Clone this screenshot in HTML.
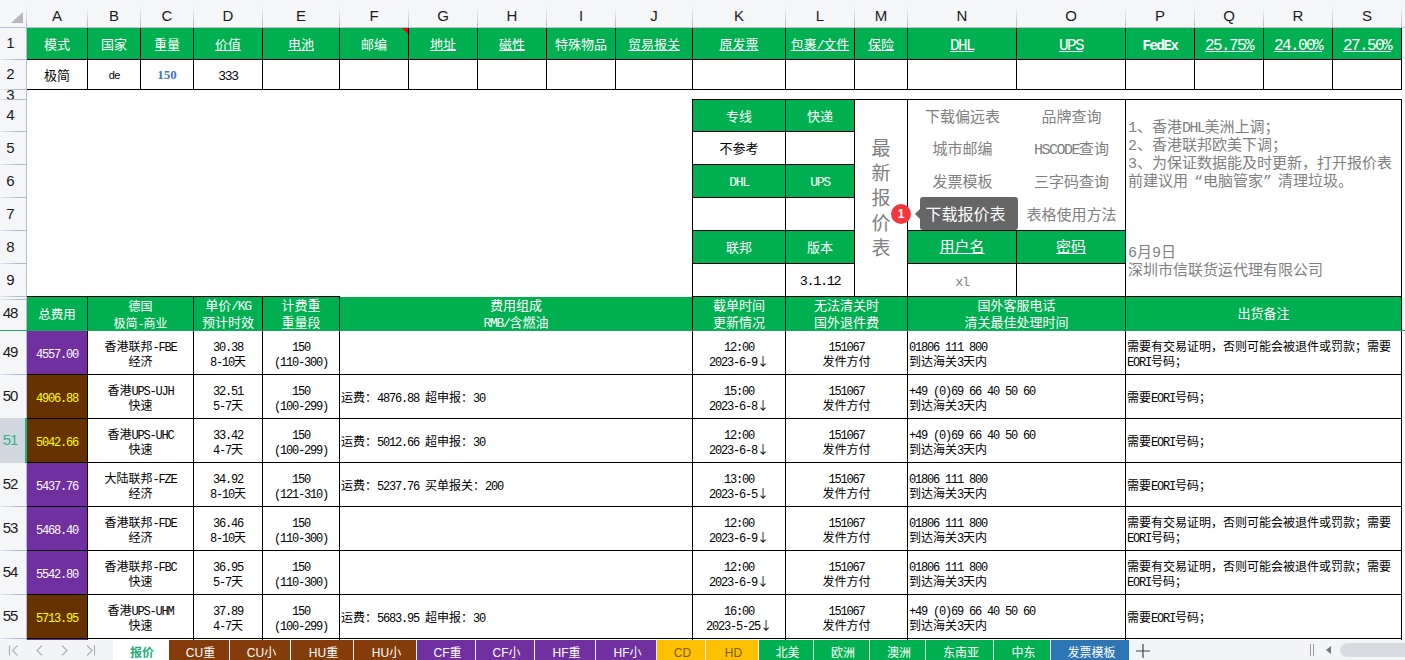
<!DOCTYPE html>
<html lang="zh-CN">
<head>
<meta charset="utf-8">
<title>报价</title>
<style>
html,body{margin:0;padding:0;}
body{width:1405px;height:660px;overflow:hidden;background:#fff;position:relative;
  font-family:"Liberation Mono","Noto Sans CJK SC",sans-serif;font-size:12px;color:#000;}
#grid{position:absolute;left:0;top:0;width:1405px;height:640px;overflow:hidden;background:#fff;}
.c{position:absolute;box-sizing:border-box;border:0 solid #000;text-align:center;line-height:15px;white-space:nowrap;overflow:hidden;}
.c .t{display:block;position:absolute;left:0;right:0;top:0;}
.l{letter-spacing:-0.1em;}
.ar{font-family:"Noto Sans CJK SC",sans-serif;line-height:0;}
.w{color:#fff;}
.y{color:#FFFF00;}
.u .t{text-decoration:underline;text-decoration-thickness:1px;text-underline-offset:1px;}
.b{font-weight:bold;}
.blue{color:#4472C4;font-weight:bold;font-family:"Liberation Serif","Noto Serif CJK SC",serif;font-size:13px !important;}
.blue .l{letter-spacing:0;margin:0;}

.grey{color:#808080;}
.left{text-align:left;}
.c.left .t{left:1px;}
.wrap{white-space:normal;}
.big{font-size:19px;line-height:25px;}
.c.big .t{top:38px;}
.links{display:block;}
.links .t{display:block;position:absolute;left:0;top:0;}
.lk{position:absolute;text-align:center;color:#808080;font-size:15px;white-space:nowrap;}
.notebox{display:block;}
.notebox .t{display:block;position:absolute;left:0;top:0;}
.notes{position:absolute;left:2px;width:272px;text-align:left;color:#808080;font-size:15px;line-height:18px;white-space:nowrap;}
.l15{letter-spacing:-0.1em;}
.ql,.qr{display:inline-block;width:1em;}
.ql{text-align:right;}
.qr{text-align:left;}
/* headers */
#colhdr{position:absolute;left:0;top:0;width:1405px;height:28px;background:#F5F6F8;}
#rowhdr{position:absolute;left:0;top:28px;width:27px;height:612px;background:#F5F6F8;}
.ch{position:absolute;top:0;height:27px;line-height:32px;text-align:center;font-family:"Liberation Sans",sans-serif;font-size:15px;color:#1a1a1a;}
.cs{position:absolute;top:6px;width:1px;height:22px;background:linear-gradient(to bottom,rgba(176,183,206,0),rgba(176,183,206,1));}
.hl{position:absolute;left:0;top:27px;width:1405px;height:1px;background:#B9BFD4;}
.rh{position:absolute;left:0;width:21px;text-align:center;font-family:"Liberation Sans",sans-serif;font-size:15px;letter-spacing:-1px;text-indent:-1px;color:#1a1a1a;}
.rh.sel{background:#D2D6DF;color:#2EB58A;padding-right:4px;}
.rs{position:absolute;left:0;width:27px;height:1px;background:linear-gradient(to right,rgba(176,183,206,0.25),rgba(176,183,206,1) 70%);}
.vl{position:absolute;left:26px;top:28px;width:1px;height:612px;background:#B4BBD2;}
/* tab bar */
#tabbar{position:absolute;left:0;top:640px;width:1405px;height:20px;background:#F3F4F8;font-family:"Liberation Sans","Noto Sans CJK SC",sans-serif;font-size:13px;}
.tab{position:absolute;top:0;height:20px;line-height:26px;text-align:center;white-space:nowrap;font-size:12px;text-indent:3px;overflow:hidden;}
.atab{position:absolute;left:113px;top:0;width:56px;height:20px;line-height:26px;overflow:hidden;background:#fff;color:#1FAF7A;font-weight:bold;text-align:center;font-size:12px;text-indent:2px;}
</style>
</head>
<body>
<div id="grid">
<div class="c g w f13" style="left:27px;top:28px;width:61px;height:32px;background:#00B050;border-width:0px 1px 1px 0px;font-size:13px;"><span class="t" style="top:10px">模式</span></div>
<div class="c g w f13" style="left:88px;top:28px;width:53px;height:32px;background:#00B050;border-width:0px 1px 1px 0px;font-size:13px;"><span class="t" style="top:10px">国家</span></div>
<div class="c g w f13" style="left:141px;top:28px;width:53px;height:32px;background:#00B050;border-width:0px 1px 1px 0px;font-size:13px;"><span class="t" style="top:10px">重量</span></div>
<div class="c g w u f13" style="left:194px;top:28px;width:69px;height:32px;background:#00B050;border-width:0px 1px 1px 0px;font-size:13px;"><span class="t" style="top:10px">价值</span></div>
<div class="c g w u f13" style="left:263px;top:28px;width:77px;height:32px;background:#00B050;border-width:0px 1px 1px 0px;font-size:13px;"><span class="t" style="top:10px">电池</span></div>
<div class="c g w f13" style="left:340px;top:28px;width:69px;height:32px;background:#00B050;border-width:0px 1px 1px 0px;font-size:13px;"><span class="t" style="top:10px">邮编</span></div>
<div class="c g w u f13" style="left:409px;top:28px;width:69px;height:32px;background:#00B050;border-width:0px 1px 1px 0px;font-size:13px;"><span class="t" style="top:10px">地址</span></div>
<div class="c g w u f13" style="left:478px;top:28px;width:69px;height:32px;background:#00B050;border-width:0px 1px 1px 0px;font-size:13px;"><span class="t" style="top:10px">磁性</span></div>
<div class="c g w f13" style="left:547px;top:28px;width:69px;height:32px;background:#00B050;border-width:0px 1px 1px 0px;font-size:13px;"><span class="t" style="top:10px">特殊物品</span></div>
<div class="c g w u f13" style="left:616px;top:28px;width:77px;height:32px;background:#00B050;border-width:0px 1px 1px 0px;font-size:13px;"><span class="t" style="top:10px">贸易报关</span></div>
<div class="c g w u f13" style="left:693px;top:28px;width:93px;height:32px;background:#00B050;border-width:0px 1px 1px 0px;font-size:13px;"><span class="t" style="top:10px">原发票</span></div>
<div class="c g w u f13" style="left:786px;top:28px;width:69px;height:32px;background:#00B050;border-width:0px 1px 1px 0px;font-size:13px;"><span class="t" style="top:10px">包裹<span class="l">/</span>文件</span></div>
<div class="c g w u f13" style="left:855px;top:28px;width:53px;height:32px;background:#00B050;border-width:0px 1px 1px 0px;font-size:13px;"><span class="t" style="top:10px">保险</span></div>
<div class="c g w u f16" style="left:908px;top:28px;width:109px;height:32px;background:#00B050;border-width:0px 1px 1px 0px;font-size:16px;"><span class="t" style="top:11px"><span class="l">DHL</span></span></div>
<div class="c g w u f16" style="left:1017px;top:28px;width:109px;height:32px;background:#00B050;border-width:0px 1px 1px 0px;font-size:16px;"><span class="t" style="top:11px"><span class="l">UPS</span></span></div>
<div class="c g w b f14" style="left:1126px;top:28px;width:69px;height:32px;background:#00B050;border-width:0px 1px 1px 0px;font-size:14px;"><span class="t" style="top:11px"><span class="l">FedEx</span></span></div>
<div class="c g w u f16" style="left:1195px;top:28px;width:69px;height:32px;background:#00B050;border-width:0px 1px 1px 0px;font-size:16px;"><span class="t" style="top:11px"><span class="l">25.75%</span></span></div>
<div class="c g w u f16" style="left:1264px;top:28px;width:69px;height:32px;background:#00B050;border-width:0px 1px 1px 0px;font-size:16px;"><span class="t" style="top:11px"><span class="l">24.00%</span></span></div>
<div class="c g w u f16" style="left:1333px;top:28px;width:69px;height:32px;background:#00B050;border-width:0px 1px 1px 0px;font-size:16px;"><span class="t" style="top:11px"><span class="l">27.50%</span></span></div>
<div class="c  f13" style="left:27px;top:60px;width:61px;height:30px;border-width:0px 1px 1px 0px;font-size:13px;"><span class="t" style="top:9px">极简</span></div>
<div class="c  f11" style="left:88px;top:60px;width:53px;height:30px;border-width:0px 1px 1px 0px;font-size:11px;"><span class="t" style="top:9px"><span class="l">de</span></span></div>
<div class="c blue f13" style="left:141px;top:60px;width:53px;height:30px;border-width:0px 1px 1px 0px;font-size:13px;"><span class="t" style="top:7px"><span class="l">150</span></span></div>
<div class="c  f13" style="left:194px;top:60px;width:69px;height:30px;border-width:0px 1px 1px 0px;font-size:13px;"><span class="t" style="top:9px"><span class="l">333</span></span></div>
<div class="c  f13" style="left:263px;top:60px;width:77px;height:30px;border-width:0px 1px 1px 0px;font-size:13px;"><span class="t" style="top:9px"></span></div>
<div class="c  f13" style="left:340px;top:60px;width:69px;height:30px;border-width:0px 1px 1px 0px;font-size:13px;"><span class="t" style="top:9px"></span></div>
<div class="c  f13" style="left:409px;top:60px;width:69px;height:30px;border-width:0px 1px 1px 0px;font-size:13px;"><span class="t" style="top:9px"></span></div>
<div class="c  f13" style="left:478px;top:60px;width:69px;height:30px;border-width:0px 1px 1px 0px;font-size:13px;"><span class="t" style="top:9px"></span></div>
<div class="c  f13" style="left:547px;top:60px;width:69px;height:30px;border-width:0px 1px 1px 0px;font-size:13px;"><span class="t" style="top:9px"></span></div>
<div class="c  f13" style="left:616px;top:60px;width:77px;height:30px;border-width:0px 1px 1px 0px;font-size:13px;"><span class="t" style="top:9px"></span></div>
<div class="c  f13" style="left:693px;top:60px;width:93px;height:30px;border-width:0px 1px 1px 0px;font-size:13px;"><span class="t" style="top:9px"></span></div>
<div class="c  f13" style="left:786px;top:60px;width:69px;height:30px;border-width:0px 1px 1px 0px;font-size:13px;"><span class="t" style="top:9px"></span></div>
<div class="c  f13" style="left:855px;top:60px;width:53px;height:30px;border-width:0px 1px 1px 0px;font-size:13px;"><span class="t" style="top:9px"></span></div>
<div class="c  f13" style="left:908px;top:60px;width:109px;height:30px;border-width:0px 1px 1px 0px;font-size:13px;"><span class="t" style="top:9px"></span></div>
<div class="c  f13" style="left:1017px;top:60px;width:109px;height:30px;border-width:0px 1px 1px 0px;font-size:13px;"><span class="t" style="top:9px"></span></div>
<div class="c  f13" style="left:1126px;top:60px;width:69px;height:30px;border-width:0px 1px 1px 0px;font-size:13px;"><span class="t" style="top:9px"></span></div>
<div class="c  f13" style="left:1195px;top:60px;width:69px;height:30px;border-width:0px 1px 1px 0px;font-size:13px;"><span class="t" style="top:9px"></span></div>
<div class="c  f13" style="left:1264px;top:60px;width:69px;height:30px;border-width:0px 1px 1px 0px;font-size:13px;"><span class="t" style="top:9px"></span></div>
<div class="c  f13" style="left:1333px;top:60px;width:69px;height:30px;border-width:0px 1px 1px 0px;font-size:13px;"><span class="t" style="top:9px"></span></div>
<div class="c w f13" style="left:692px;top:99px;width:94px;height:33px;background:#00B050;border-width:1px 1px 1px 1px;font-size:13px;"><span class="t" style="top:10px">专线</span></div>
<div class="c w f13" style="left:786px;top:99px;width:69px;height:33px;background:#00B050;border-width:1px 1px 1px 0px;font-size:13px;"><span class="t" style="top:10px">快递</span></div>
<div class="c  f13" style="left:692px;top:132px;width:94px;height:33px;border-width:0px 1px 1px 1px;font-size:13px;"><span class="t" style="top:10px">不参考</span></div>
<div class="c  f13" style="left:786px;top:132px;width:69px;height:33px;border-width:0px 1px 1px 0px;font-size:13px;"><span class="t" style="top:10px"></span></div>
<div class="c w f13" style="left:692px;top:165px;width:94px;height:33px;background:#00B050;border-width:0px 1px 1px 1px;font-size:13px;"><span class="t" style="top:10px"><span class="l">DHL</span></span></div>
<div class="c w f13" style="left:786px;top:165px;width:69px;height:33px;background:#00B050;border-width:0px 1px 1px 0px;font-size:13px;"><span class="t" style="top:10px"><span class="l">UPS</span></span></div>
<div class="c  f13" style="left:692px;top:198px;width:94px;height:33px;border-width:0px 1px 1px 1px;font-size:13px;"><span class="t" style="top:10px"></span></div>
<div class="c  f13" style="left:786px;top:198px;width:69px;height:33px;border-width:0px 1px 1px 0px;font-size:13px;"><span class="t" style="top:10px"></span></div>
<div class="c w f13" style="left:692px;top:231px;width:94px;height:33px;background:#00B050;border-width:0px 1px 1px 1px;font-size:13px;"><span class="t" style="top:10px">联邦</span></div>
<div class="c w f13" style="left:786px;top:231px;width:69px;height:33px;background:#00B050;border-width:0px 1px 1px 0px;font-size:13px;"><span class="t" style="top:10px">版本</span></div>
<div class="c  f13" style="left:692px;top:264px;width:94px;height:33px;border-width:0px 1px 1px 1px;font-size:13px;"><span class="t" style="top:10px"></span></div>
<div class="c  f13" style="left:786px;top:264px;width:69px;height:33px;border-width:0px 1px 1px 0px;font-size:13.5px;"><span class="t" style="top:10px"><span class="l">3.1.12</span></span></div>
<div class="c big grey" style="left:855px;top:99px;width:53px;height:198px;border-width:1px 1px 1px 0px;"><span class="t">最<br>新<br>报<br>价<br>表</span></div>
<div class="c links" style="left:908px;top:99px;width:218px;height:132px;border-width:1px 1px 1px 0px;"><span class="t"><div class="lk" style="left:0;top:3px;width:109px;height:31px;line-height:31px">下载偏远表</div><div class="lk" style="left:109px;top:3px;width:109px;height:31px;line-height:31px">品牌查询</div><div class="lk" style="left:0;top:35px;width:109px;height:32px;line-height:32px">城市邮编</div><div class="lk" style="left:109px;top:35px;width:109px;height:32px;line-height:32px"><span class="l">HSCODE</span>查询</div><div class="lk" style="left:0;top:68px;width:109px;height:32px;line-height:32px">发票模板</div><div class="lk" style="left:109px;top:68px;width:109px;height:32px;line-height:32px">三字码查询</div><div class="lk" style="left:0;top:101px;width:109px;height:32px;line-height:32px"></div><div class="lk" style="left:109px;top:101px;width:109px;height:32px;line-height:32px">表格使用方法</div></span></div>
<div class="c w u f15" style="left:908px;top:231px;width:109px;height:33px;background:#00B050;border-width:0px 1px 1px 0px;font-size:15px;"><span class="t" style="top:10px">用户名</span></div>
<div class="c w u f15" style="left:1017px;top:231px;width:109px;height:33px;background:#00B050;border-width:0px 1px 1px 0px;font-size:15px;"><span class="t" style="top:10px">密码</span></div>
<div class="c grey f13" style="left:908px;top:264px;width:109px;height:33px;border-width:0px 1px 1px 0px;font-size:13.5px;"><span class="t" style="top:11px"><span class="l">xl</span></span></div>
<div class="c " style="left:1017px;top:264px;width:109px;height:33px;border-width:0px 1px 1px 0px;"><span class="t" style="top:11px"></span></div>
<div class="c notebox" style="left:1126px;top:99px;width:276px;height:198px;border-width:1px 1px 1px 0px;"><span class="t"><div class="notes" style="top:20px">1、香港<span class="l15">DHL</span>美洲上调；<br>2、香港联邦欧美下调；<br>3、为保证数据能及时更新，打开报价表<br>前建议用<span class="ql">“</span>电脑管家<span class="qr">”</span>清理垃圾。</div><div class="notes" style="top:145px">6月9日<br>深圳市信联货运代理有限公司</div></span></div>
<div class="c w f12" style="left:27px;top:296px;width:61px;height:35px;background:#00B050;border-width:1px 1px 1px 0px;font-size:12.5px;"><span class="t" style="top:12px">总费用</span></div>
<div class="c w" style="left:88px;top:296px;width:106px;height:35px;background:#00B050;border-width:1px 1px 1px 0px;line-height:16.5px;"><span class="t" style="top:3px">德国<br>极简<span class="l">-</span>商业</span></div>
<div class="c w f13" style="left:194px;top:296px;width:69px;height:35px;background:#00B050;border-width:1px 1px 1px 0px;font-size:13px;line-height:16.5px;"><span class="t" style="top:2px">单价<span class="l">/KG</span><br>预计时效</span></div>
<div class="c w f13" style="left:263px;top:296px;width:77px;height:35px;background:#00B050;border-width:1px 1px 1px 0px;font-size:13px;line-height:16.5px;"><span class="t" style="top:2px">计费重<br>重量段</span></div>
<div class="c w f13" style="left:340px;top:297px;width:353px;height:34px;background:#00B050;border-width:0px 1px 0px 0px;font-size:13px;line-height:16.5px;"><span class="t" style="top:2px">费用组成<br><span class="l">RMB/</span>含燃油</span></div>
<div class="c w f13" style="left:693px;top:297px;width:93px;height:34px;background:#00B050;border-width:0px 1px 0px 0px;font-size:13px;line-height:16.5px;"><span class="t" style="top:2px">截单时间<br>更新情况</span></div>
<div class="c w f13" style="left:786px;top:297px;width:122px;height:34px;background:#00B050;border-width:0px 1px 0px 0px;font-size:13px;line-height:16.5px;"><span class="t" style="top:2px">无法清关时<br>国外退件费</span></div>
<div class="c w f13" style="left:908px;top:297px;width:218px;height:34px;background:#00B050;border-width:0px 1px 0px 0px;font-size:13px;line-height:16.5px;"><span class="t" style="top:2px">国外客服电话<br>清关最佳处理时间</span></div>
<div class="c w f13" style="left:1126px;top:297px;width:276px;height:34px;background:#00B050;border-width:0px 1px 0px 0px;font-size:13px;line-height:16.5px;"><span class="t" style="top:10px">出货备注</span></div>
<div class="c w num" style="left:27px;top:331px;width:61px;height:44px;background:#7030A0;border-width:0px 1px 1px 0px;"><span class="t" style="top:17px"><span class="l">4557.00</span></span></div>
<div class="c " style="left:88px;top:331px;width:106px;height:44px;border-width:0px 1px 1px 0px;"><span class="t" style="top:10px">香港联邦<span class="l">-FBE</span><br>经济</span></div>
<div class="c " style="left:194px;top:331px;width:69px;height:44px;border-width:0px 1px 1px 0px;"><span class="t" style="top:10px"><span class="l">30.38</span><br><span class="l">8-10</span>天</span></div>
<div class="c " style="left:263px;top:331px;width:77px;height:44px;border-width:0px 1px 1px 0px;"><span class="t" style="top:10px"><span class="l">150</span><br><span class="l">(110-300)</span></span></div>
<div class="c left" style="left:340px;top:331px;width:353px;height:44px;border-width:0px 1px 1px 0px;"><span class="t" style="top:17px"></span></div>
<div class="c " style="left:693px;top:331px;width:93px;height:44px;border-width:0px 1px 1px 0px;"><span class="t" style="top:10px"><span class="l">12:00</span><br><span class="l">2023-6-9</span><span class="ar">↓</span></span></div>
<div class="c " style="left:786px;top:331px;width:122px;height:44px;border-width:0px 1px 1px 0px;"><span class="t" style="top:10px"><span class="l">151067</span><br>发件方付</span></div>
<div class="c left" style="left:908px;top:331px;width:218px;height:44px;border-width:0px 1px 1px 0px;"><span class="t" style="top:10px"><span class="l">01806 111 800</span><br>到达海关<span class="l">3</span>天内</span></div>
<div class="c left wrap" style="left:1126px;top:331px;width:276px;height:44px;border-width:0px 1px 1px 0px;"><span class="t" style="top:10px">需要有交易证明，否则可能会被退件或罚款；需要<span class="l">EORI</span>号码；</span></div>
<div class="c y num" style="left:27px;top:375px;width:61px;height:44px;background:#663300;border-width:0px 1px 1px 0px;"><span class="t" style="top:17px"><span class="l">4906.88</span></span></div>
<div class="c " style="left:88px;top:375px;width:106px;height:44px;border-width:0px 1px 1px 0px;"><span class="t" style="top:10px">香港<span class="l">UPS-UJH</span><br>快速</span></div>
<div class="c " style="left:194px;top:375px;width:69px;height:44px;border-width:0px 1px 1px 0px;"><span class="t" style="top:10px"><span class="l">32.51</span><br><span class="l">5-7</span>天</span></div>
<div class="c " style="left:263px;top:375px;width:77px;height:44px;border-width:0px 1px 1px 0px;"><span class="t" style="top:10px"><span class="l">150</span><br><span class="l">(100-299)</span></span></div>
<div class="c left" style="left:340px;top:375px;width:353px;height:44px;border-width:0px 1px 1px 0px;"><span class="t" style="top:17px">运费：<span class="l">4876.88 </span>超申报：<span class="l">30</span></span></div>
<div class="c " style="left:693px;top:375px;width:93px;height:44px;border-width:0px 1px 1px 0px;"><span class="t" style="top:10px"><span class="l">15:00</span><br><span class="l">2023-6-8</span><span class="ar">↓</span></span></div>
<div class="c " style="left:786px;top:375px;width:122px;height:44px;border-width:0px 1px 1px 0px;"><span class="t" style="top:10px"><span class="l">151067</span><br>发件方付</span></div>
<div class="c left" style="left:908px;top:375px;width:218px;height:44px;border-width:0px 1px 1px 0px;"><span class="t" style="top:10px"><span class="l">+49 (0)69 66 40 50 60</span><br>到达海关<span class="l">3</span>天内</span></div>
<div class="c left wrap" style="left:1126px;top:375px;width:276px;height:44px;border-width:0px 1px 1px 0px;"><span class="t" style="top:17px">需要<span class="l">EORI</span>号码；</span></div>
<div class="c y num" style="left:27px;top:419px;width:61px;height:44px;background:#663300;border-width:0px 1px 1px 0px;"><span class="t" style="top:17px"><span class="l">5042.66</span></span></div>
<div class="c " style="left:88px;top:419px;width:106px;height:44px;border-width:0px 1px 1px 0px;"><span class="t" style="top:10px">香港<span class="l">UPS-UHC</span><br>快速</span></div>
<div class="c " style="left:194px;top:419px;width:69px;height:44px;border-width:0px 1px 1px 0px;"><span class="t" style="top:10px"><span class="l">33.42</span><br><span class="l">4-7</span>天</span></div>
<div class="c " style="left:263px;top:419px;width:77px;height:44px;border-width:0px 1px 1px 0px;"><span class="t" style="top:10px"><span class="l">150</span><br><span class="l">(100-299)</span></span></div>
<div class="c left" style="left:340px;top:419px;width:353px;height:44px;border-width:0px 1px 1px 0px;"><span class="t" style="top:17px">运费：<span class="l">5012.66 </span>超申报：<span class="l">30</span></span></div>
<div class="c " style="left:693px;top:419px;width:93px;height:44px;border-width:0px 1px 1px 0px;"><span class="t" style="top:10px"><span class="l">12:00</span><br><span class="l">2023-6-8</span><span class="ar">↓</span></span></div>
<div class="c " style="left:786px;top:419px;width:122px;height:44px;border-width:0px 1px 1px 0px;"><span class="t" style="top:10px"><span class="l">151067</span><br>发件方付</span></div>
<div class="c left" style="left:908px;top:419px;width:218px;height:44px;border-width:0px 1px 1px 0px;"><span class="t" style="top:10px"><span class="l">+49 (0)69 66 40 50 60</span><br>到达海关<span class="l">3</span>天内</span></div>
<div class="c left wrap" style="left:1126px;top:419px;width:276px;height:44px;border-width:0px 1px 1px 0px;"><span class="t" style="top:17px">需要<span class="l">EORI</span>号码；</span></div>
<div class="c w num" style="left:27px;top:463px;width:61px;height:44px;background:#7030A0;border-width:0px 1px 1px 0px;"><span class="t" style="top:17px"><span class="l">5437.76</span></span></div>
<div class="c " style="left:88px;top:463px;width:106px;height:44px;border-width:0px 1px 1px 0px;"><span class="t" style="top:10px">大陆联邦<span class="l">-FZE</span><br>经济</span></div>
<div class="c " style="left:194px;top:463px;width:69px;height:44px;border-width:0px 1px 1px 0px;"><span class="t" style="top:10px"><span class="l">34.92</span><br><span class="l">8-10</span>天</span></div>
<div class="c " style="left:263px;top:463px;width:77px;height:44px;border-width:0px 1px 1px 0px;"><span class="t" style="top:10px"><span class="l">150</span><br><span class="l">(121-310)</span></span></div>
<div class="c left" style="left:340px;top:463px;width:353px;height:44px;border-width:0px 1px 1px 0px;"><span class="t" style="top:17px">运费：<span class="l">5237.76 </span>买单报关：<span class="l">200</span></span></div>
<div class="c " style="left:693px;top:463px;width:93px;height:44px;border-width:0px 1px 1px 0px;"><span class="t" style="top:10px"><span class="l">13:00</span><br><span class="l">2023-6-5</span><span class="ar">↓</span></span></div>
<div class="c " style="left:786px;top:463px;width:122px;height:44px;border-width:0px 1px 1px 0px;"><span class="t" style="top:10px"><span class="l">151067</span><br>发件方付</span></div>
<div class="c left" style="left:908px;top:463px;width:218px;height:44px;border-width:0px 1px 1px 0px;"><span class="t" style="top:10px"><span class="l">01806 111 800</span><br>到达海关<span class="l">3</span>天内</span></div>
<div class="c left wrap" style="left:1126px;top:463px;width:276px;height:44px;border-width:0px 1px 1px 0px;"><span class="t" style="top:17px">需要<span class="l">EORI</span>号码；</span></div>
<div class="c w num" style="left:27px;top:507px;width:61px;height:44px;background:#7030A0;border-width:0px 1px 1px 0px;"><span class="t" style="top:17px"><span class="l">5468.40</span></span></div>
<div class="c " style="left:88px;top:507px;width:106px;height:44px;border-width:0px 1px 1px 0px;"><span class="t" style="top:10px">香港联邦<span class="l">-FDE</span><br>经济</span></div>
<div class="c " style="left:194px;top:507px;width:69px;height:44px;border-width:0px 1px 1px 0px;"><span class="t" style="top:10px"><span class="l">36.46</span><br><span class="l">8-10</span>天</span></div>
<div class="c " style="left:263px;top:507px;width:77px;height:44px;border-width:0px 1px 1px 0px;"><span class="t" style="top:10px"><span class="l">150</span><br><span class="l">(110-300)</span></span></div>
<div class="c left" style="left:340px;top:507px;width:353px;height:44px;border-width:0px 1px 1px 0px;"><span class="t" style="top:17px"></span></div>
<div class="c " style="left:693px;top:507px;width:93px;height:44px;border-width:0px 1px 1px 0px;"><span class="t" style="top:10px"><span class="l">12:00</span><br><span class="l">2023-6-9</span><span class="ar">↓</span></span></div>
<div class="c " style="left:786px;top:507px;width:122px;height:44px;border-width:0px 1px 1px 0px;"><span class="t" style="top:10px"><span class="l">151067</span><br>发件方付</span></div>
<div class="c left" style="left:908px;top:507px;width:218px;height:44px;border-width:0px 1px 1px 0px;"><span class="t" style="top:10px"><span class="l">01806 111 800</span><br>到达海关<span class="l">3</span>天内</span></div>
<div class="c left wrap" style="left:1126px;top:507px;width:276px;height:44px;border-width:0px 1px 1px 0px;"><span class="t" style="top:10px">需要有交易证明，否则可能会被退件或罚款；需要<span class="l">EORI</span>号码；</span></div>
<div class="c w num" style="left:27px;top:551px;width:61px;height:44px;background:#7030A0;border-width:0px 1px 1px 0px;"><span class="t" style="top:17px"><span class="l">5542.80</span></span></div>
<div class="c " style="left:88px;top:551px;width:106px;height:44px;border-width:0px 1px 1px 0px;"><span class="t" style="top:10px">香港联邦<span class="l">-FBC</span><br>快速</span></div>
<div class="c " style="left:194px;top:551px;width:69px;height:44px;border-width:0px 1px 1px 0px;"><span class="t" style="top:10px"><span class="l">36.95</span><br><span class="l">5-7</span>天</span></div>
<div class="c " style="left:263px;top:551px;width:77px;height:44px;border-width:0px 1px 1px 0px;"><span class="t" style="top:10px"><span class="l">150</span><br><span class="l">(110-300)</span></span></div>
<div class="c left" style="left:340px;top:551px;width:353px;height:44px;border-width:0px 1px 1px 0px;"><span class="t" style="top:17px"></span></div>
<div class="c " style="left:693px;top:551px;width:93px;height:44px;border-width:0px 1px 1px 0px;"><span class="t" style="top:10px"><span class="l">12:00</span><br><span class="l">2023-6-9</span><span class="ar">↓</span></span></div>
<div class="c " style="left:786px;top:551px;width:122px;height:44px;border-width:0px 1px 1px 0px;"><span class="t" style="top:10px"><span class="l">151067</span><br>发件方付</span></div>
<div class="c left" style="left:908px;top:551px;width:218px;height:44px;border-width:0px 1px 1px 0px;"><span class="t" style="top:10px"><span class="l">01806 111 800</span><br>到达海关<span class="l">3</span>天内</span></div>
<div class="c left wrap" style="left:1126px;top:551px;width:276px;height:44px;border-width:0px 1px 1px 0px;"><span class="t" style="top:10px">需要有交易证明，否则可能会被退件或罚款；需要<span class="l">EORI</span>号码；</span></div>
<div class="c y num" style="left:27px;top:595px;width:61px;height:44px;background:#663300;border-width:0px 1px 1px 0px;"><span class="t" style="top:17px"><span class="l">5713.95</span></span></div>
<div class="c " style="left:88px;top:595px;width:106px;height:44px;border-width:0px 1px 1px 0px;"><span class="t" style="top:10px">香港<span class="l">UPS-UHM</span><br>快速</span></div>
<div class="c " style="left:194px;top:595px;width:69px;height:44px;border-width:0px 1px 1px 0px;"><span class="t" style="top:10px"><span class="l">37.89</span><br><span class="l">4-7</span>天</span></div>
<div class="c " style="left:263px;top:595px;width:77px;height:44px;border-width:0px 1px 1px 0px;"><span class="t" style="top:10px"><span class="l">150</span><br><span class="l">(100-299)</span></span></div>
<div class="c left" style="left:340px;top:595px;width:353px;height:44px;border-width:0px 1px 1px 0px;"><span class="t" style="top:17px">运费：<span class="l">5683.95 </span>超申报：<span class="l">30</span></span></div>
<div class="c " style="left:693px;top:595px;width:93px;height:44px;border-width:0px 1px 1px 0px;"><span class="t" style="top:10px"><span class="l">16:00</span><br><span class="l">2023-5-25</span><span class="ar">↓</span></span></div>
<div class="c " style="left:786px;top:595px;width:122px;height:44px;border-width:0px 1px 1px 0px;"><span class="t" style="top:10px"><span class="l">151067</span><br>发件方付</span></div>
<div class="c left" style="left:908px;top:595px;width:218px;height:44px;border-width:0px 1px 1px 0px;"><span class="t" style="top:10px"><span class="l">+49 (0)69 66 40 50 60</span><br>到达海关<span class="l">3</span>天内</span></div>
<div class="c left wrap" style="left:1126px;top:595px;width:276px;height:44px;border-width:0px 1px 1px 0px;"><span class="t" style="top:17px">需要<span class="l">EORI</span>号码；</span></div>
<div style="position:absolute;left:27px;top:639px;width:60px;height:1px;background:#7030A0"></div>
<div style="position:absolute;left:87px;top:639px;width:1px;height:1px;background:#000"></div>
<div style="position:absolute;left:193px;top:639px;width:1px;height:1px;background:#000"></div>
<div style="position:absolute;left:262px;top:639px;width:1px;height:1px;background:#000"></div>
<div style="position:absolute;left:339px;top:639px;width:1px;height:1px;background:#000"></div>
<div style="position:absolute;left:692px;top:639px;width:1px;height:1px;background:#000"></div>
<div style="position:absolute;left:785px;top:639px;width:1px;height:1px;background:#000"></div>
<div style="position:absolute;left:907px;top:639px;width:1px;height:1px;background:#000"></div>
<div style="position:absolute;left:1125px;top:639px;width:1px;height:1px;background:#000"></div>
<div style="position:absolute;left:1401px;top:639px;width:1px;height:1px;background:#000"></div>
<!-- frozen pane line -->
<div style="position:absolute;left:0;top:330px;width:1405px;height:1px;background:#21A366"></div>
<!-- comment marker -->
<svg style="position:absolute;left:402px;top:28px" width="6" height="6"><polygon points="0,0 6,0 6,6" fill="#FF0000"/></svg>
<!-- tooltip -->
<div style="position:absolute;left:920px;top:197px;width:98px;height:33px;background:#666;border-radius:3px;color:#fff;font-family:'Liberation Sans','Noto Sans CJK SC',sans-serif;font-size:16px;line-height:35px;text-align:left;padding-left:5.5px;box-sizing:border-box;white-space:nowrap;">下载报价表</div>
<svg style="position:absolute;left:915px;top:208px" width="6" height="12"><polygon points="0,6 6,0 6,12" fill="#666"/></svg>
<div style="position:absolute;left:891px;top:204px;width:20px;height:20px;border-radius:10px;background:#F5363C;color:#fff;font-family:'Liberation Sans',sans-serif;font-weight:bold;font-size:12px;line-height:20px;text-align:center;">1</div>
</div>
<div id="colhdr">
<svg style="position:absolute;left:11px;top:12px" width="12" height="11"><polygon points="12,0 12,11 0,11" fill="#B7B7B7"/></svg>
</div>
<div id="rowhdr" style="top:28px"></div>
<div id="hdrs" style="position:absolute;left:0;top:0">
<div class="ch" style="left:27px;width:60px">A</div>
<div class="cs" style="left:87px"></div>
<div class="ch" style="left:88px;width:52px">B</div>
<div class="cs" style="left:140px"></div>
<div class="ch" style="left:141px;width:52px">C</div>
<div class="cs" style="left:193px"></div>
<div class="ch" style="left:194px;width:68px">D</div>
<div class="cs" style="left:262px"></div>
<div class="ch" style="left:263px;width:76px">E</div>
<div class="cs" style="left:339px"></div>
<div class="ch" style="left:340px;width:68px">F</div>
<div class="cs" style="left:408px"></div>
<div class="ch" style="left:409px;width:68px">G</div>
<div class="cs" style="left:477px"></div>
<div class="ch" style="left:478px;width:68px">H</div>
<div class="cs" style="left:546px"></div>
<div class="ch" style="left:547px;width:68px">I</div>
<div class="cs" style="left:615px"></div>
<div class="ch" style="left:616px;width:76px">J</div>
<div class="cs" style="left:692px"></div>
<div class="ch" style="left:693px;width:92px">K</div>
<div class="cs" style="left:785px"></div>
<div class="ch" style="left:786px;width:68px">L</div>
<div class="cs" style="left:854px"></div>
<div class="ch" style="left:855px;width:52px">M</div>
<div class="cs" style="left:907px"></div>
<div class="ch" style="left:908px;width:108px">N</div>
<div class="cs" style="left:1016px"></div>
<div class="ch" style="left:1017px;width:108px">O</div>
<div class="cs" style="left:1125px"></div>
<div class="ch" style="left:1126px;width:68px">P</div>
<div class="cs" style="left:1194px"></div>
<div class="ch" style="left:1195px;width:68px">Q</div>
<div class="cs" style="left:1263px"></div>
<div class="ch" style="left:1264px;width:68px">R</div>
<div class="cs" style="left:1332px"></div>
<div class="ch" style="left:1333px;width:68px">S</div>
<div class="cs" style="left:1401px"></div>
<div class="cs" style="left:26px"></div>
<div class="rh" style="top:28px;height:31px;line-height:30px">1</div>
<div class="rs" style="top:59px"></div>
<div class="rh" style="top:60px;height:29px;line-height:28px">2</div>
<div class="rs" style="top:89px"></div>
<div class="rh" style="top:90px;height:10px;overflow:hidden"><span style="position:absolute;left:0;width:21px;top:-4px;line-height:17px">3</span></div>
<div class="rs" style="top:99px"></div>
<div class="rh" style="top:100px;height:31px;line-height:30px">4</div>
<div class="rs" style="top:131px"></div>
<div class="rh" style="top:132px;height:32px;line-height:31px">5</div>
<div class="rs" style="top:164px"></div>
<div class="rh" style="top:165px;height:32px;line-height:31px">6</div>
<div class="rs" style="top:197px"></div>
<div class="rh" style="top:198px;height:32px;line-height:31px">7</div>
<div class="rs" style="top:230px"></div>
<div class="rh" style="top:231px;height:32px;line-height:31px">8</div>
<div class="rs" style="top:263px"></div>
<div class="rh" style="top:264px;height:32px;line-height:31px">9</div>
<div class="rs" style="top:296px"></div>
<div class="rh" style="top:297px;height:33px;line-height:32px">48</div>
<div class="rs" style="top:330px"></div>
<div class="rh" style="top:331px;height:43px;line-height:42px">49</div>
<div class="rs" style="top:374px"></div>
<div class="rh" style="top:375px;height:43px;line-height:42px">50</div>
<div class="rh sel" style="top:418px;height:45px;line-height:44px">51</div>
<div class="rh" style="top:463px;height:43px;line-height:42px">52</div>
<div class="rs" style="top:506px"></div>
<div class="rh" style="top:507px;height:43px;line-height:42px">53</div>
<div class="rs" style="top:550px"></div>
<div class="rh" style="top:551px;height:43px;line-height:42px">54</div>
<div class="rs" style="top:594px"></div>
<div class="rh" style="top:595px;height:43px;line-height:42px">55</div>
<div class="rs" style="top:638px"></div>
<div class="rs" style="top:299px"></div>
<div class="hl"></div>
<div class="vl"></div>
<div style="position:absolute;left:25px;top:418px;width:2px;height:45px;background:#21B07A"></div>
<div style="position:absolute;left:0;top:330px;width:27px;height:1px;background:#21A366"></div>
</div>
<div id="tabbar">
<div style="position:absolute;left:0;top:0;width:113px;height:20px;background:#F3F4F8"></div>
<svg style="position:absolute;left:0;top:0" width="113" height="20" fill="none" stroke="#B0B0B0" stroke-width="1.2">
<path d="M9.5 5.5v10M17.5 5.5l-5 5 5 5"/>
<path d="M42 5.5l-5 5 5 5"/>
<path d="M62 5.5l5 5-5 5"/>
<path d="M87 5.5l5 5-5 5M94.5 5.5v10"/>
</svg>
<div class="atab">报价</div>
<div class="tab" style="left:169px;width:60px;background:#843C0B;color:#fff">CU重</div>
<div class="tab" style="left:230px;width:60px;background:#843C0B;color:#fff">CU小</div>
<div class="tab" style="left:291px;width:62px;background:#843C0B;color:#fff">HU重</div>
<div class="tab" style="left:354px;width:62px;background:#843C0B;color:#fff">HU小</div>
<div class="tab" style="left:417px;width:58px;background:#7030A0;color:#fff">CF重</div>
<div class="tab" style="left:476px;width:58px;background:#7030A0;color:#fff">CF小</div>
<div class="tab" style="left:535px;width:60px;background:#7030A0;color:#fff">HF重</div>
<div class="tab" style="left:596px;width:60px;background:#7030A0;color:#fff">HF小</div>
<div class="tab" style="left:657px;width:48px;background:#FFC000;color:#7a5c1e">CD</div>
<div class="tab" style="left:706px;width:52px;background:#FFC000;color:#7a5c1e">HD</div>
<div class="tab" style="left:759px;width:54px;background:#00B050;color:#fff">北美</div>
<div class="tab" style="left:814px;width:55px;background:#00B050;color:#fff">欧洲</div>
<div class="tab" style="left:870px;width:55px;background:#00B050;color:#fff">澳洲</div>
<div class="tab" style="left:926px;width:67px;background:#00B050;color:#fff">东南亚</div>
<div class="tab" style="left:994px;width:56px;background:#00B050;color:#fff">中东</div>
<div class="tab" style="left:1051px;width:78px;background:#2E75B6;color:#fff">发票模板</div>
<svg style="position:absolute;left:1134px;top:2px" width="18" height="18" stroke="#444" stroke-width="1.2"><path d="M9 2v14M2 9h14"/></svg>
<div style="position:absolute;left:1310px;top:4px;width:1px;height:12px;background:#999"></div>
<div style="position:absolute;left:1313px;top:4px;width:1px;height:12px;background:#999"></div>
<svg style="position:absolute;left:1324px;top:5px" width="8" height="10"><polygon points="7,1 7,9 2,5" fill="#777"/></svg>
<div style="position:absolute;left:1340px;top:3px;width:80px;height:14px;border-radius:7px;background:#D9DBE1"></div>
</div>
</body>
</html>
